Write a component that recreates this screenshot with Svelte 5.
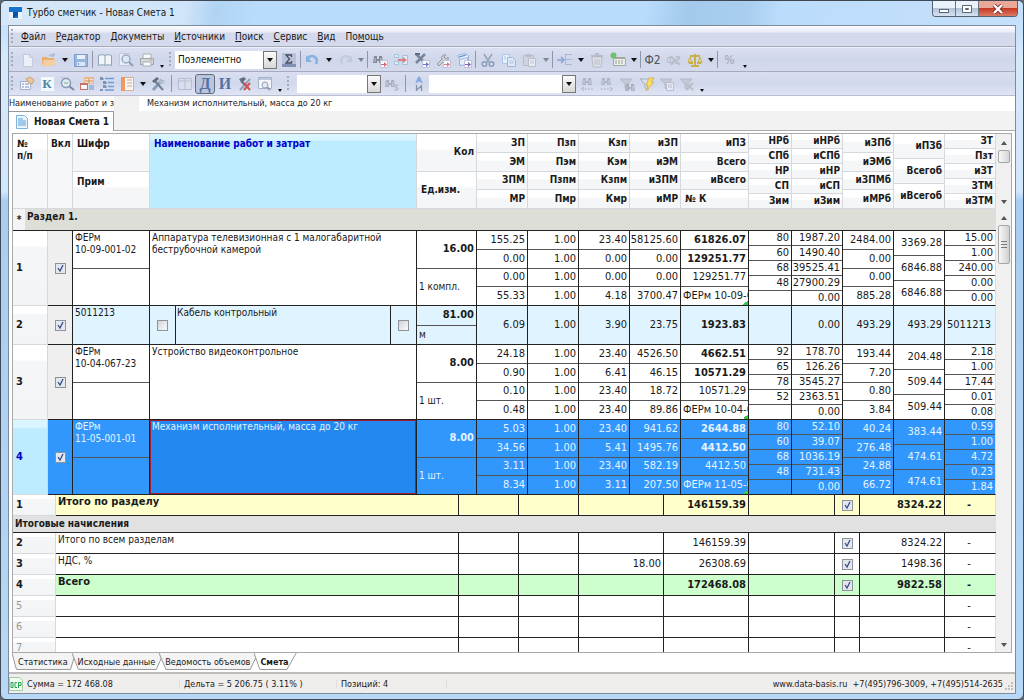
<script lang="ts">
	interface EstimateRow {
		num: number;
		code: string[];
		name: string;
		qty: string;
		unit: string;
		resource?: boolean;
		values: string[][];
	}

	interface TotalRow {
		num: number;
		name: string;
		percent?: string;
		sum?: string;
		base?: string;
		kind?: string;
	}

	interface Tool {
		type?: 'icon' | 'caret' | 'sep' | 'grip' | 'more' | 'combo';
		icon?: string;
		title?: string;
		options?: string[];
		size?: string;
		off?: boolean;
		pressed?: boolean;
	}

	const menu = [
		['', 'Ф', 'айл'],
		['', 'Р', 'едактор'],
		['', 'Д', 'окументы'],
		['', 'И', 'сточники'],
		['', 'П', 'оиск'],
		['', 'С', 'ервис'],
		['', 'В', 'ид'],
		['По', 'м', 'ощь']
	];

	const binoc = '<path d="M2 4h3v3h2V4h3l1 7H7V9H5v2H1z" fill="#777d86"/><path d="M3 6v4M9 6v4" stroke="#c4c8d0"/>';
	const arrowBox = (c: string) =>
		`<path d="M8.500 8.500h7v7h-7z" fill="#fff" stroke="#b9bfd6"/><path d="M9 12h3v-2l3 2.500-3 2.500v-2H9z" fill="${c}"/>`;
	const funnel = '<path d="M1 3h12L9 8v6l-3-2V8z" fill="#c3c7d3" stroke="#b0b5c4"/>';

	// 16x16 toolbar glyphs
	const icons: Record<string, string> = {
		new: '<path d="M3.500 2.500h6l3 3v9h-9z" fill="#f3f5fb" stroke="#c3c9db"/><path d="M9.500 2.500v3h3" fill="none" stroke="#c3c9db"/>',
		open: '<path d="M1 5h5l1 1h6v8H1z" fill="#eda95c"/><path d="M3 8h12l-2 6H1z" fill="#f8cd94"/><path d="M8 4c1-2 4-2 5 0M13 1v3h-3" fill="none" stroke="#8fa6c4"/>',
		save: '<path d="M1.500 2.500h13v12h-13z" fill="#8fb2df" stroke="#6f94c7"/><path d="M4 3h8v4H4z" fill="#edf3fb"/><path d="M4 10h8v4H4z" fill="#dde8f6"/><path d="M5.500 11v2" stroke="#6f94c7"/>',
		book: '<path d="M1.500 3.500c2-1 5-1 6.500 0 1.500-1 4.500-1 6.500 0v10c-2-1-5-1-6.500 0-1.500-1-4.500-1-6.500 0z" fill="#f8fafc" stroke="#7f9ba9"/><path d="M8 3v10" stroke="#7f9ba9"/>',
		preview: '<path d="M1.500 1.500h10v12h-10z" fill="#eef2fa" stroke="#bcc6dc"/><circle cx="8" cy="7" r="4" fill="#dcebfa" stroke="#93a3b9" stroke-width="1.500"/><path d="M11 10l4 4" stroke="#8693a6" stroke-width="2"/>',
		print: '<path d="M4 6V2h8v4" fill="#fff" stroke="#a5a9b0"/><path d="M1.500 6.500h13v6h-13z" fill="#d5d5d3" stroke="#9b9d9f"/><path d="M4 10h8v4H4z" fill="#fff" stroke="#a5a9b0"/><path d="M11 8h2" stroke="#c9a24d"/>',
		sigma: '<path d="M1 1h14v14H1z" fill="#b4bfd8"/><path d="M1 12h14v3H1z" fill="#7486ad"/><path d="M10.500 5V3H5l3.500 4L5 11h5.500V9" fill="none" stroke="#2f3744" stroke-width="1.300"/>',
		undo: '<path d="M3 6c4-4 11-1 8 6" fill="none" stroke="#7bacdf" stroke-width="2.500"/><path d="M1 3v7h6z" fill="#7bacdf"/>',
		redo: '<path d="M13 6C9 2 2 5 5 12" fill="none" stroke="#c0c7da" stroke-width="2"/><path d="M15 3v7H9z" fill="#c0c7da"/>',
		find: binoc + arrowBox('#d5565e'),
		blocks: '<path d="M1.500 2.500h4v3h-4zM1.500 9.500h4v3h-4zM9.500 3.500h5v9h-5z" fill="#e6f0f8" stroke="#9dc0d2"/><path d="M5 7h5V5l4 3-4 3V9H5z" fill="#df6b73"/>',
		toolsGo: '<path d="M2 2l9 9M11 2l-9 9" stroke="#66788f" stroke-width="2.500"/><path d="M1 2h5" stroke="#4d5c70" stroke-width="2"/>' + arrowBox('#5868c7'),
		wrenchGo: '<path d="M2 12l5-5a3 3 0 0 1 4-4l-2 2 2 2 2-2a3 3 0 0 1-4 4l-5 5z" fill="#c9cdd4" stroke="#8e9097"/>' + arrowBox('#df6b73'),
		docsGo: '<path d="M1.500 3.500l7-2 4 2v6l-7 1z" fill="#f5f9ff" stroke="#8fb0dc"/><path d="M3.500 7.500l8-2v7l-8 1z" fill="#e9f1fc" stroke="#8fb0dc"/><path d="M3 5l7-2" stroke="#5f8fd2" stroke-width="1.500"/>' + arrowBox('#7b50b8'),
		cut: '<path d="M4 2l5 8M12 2l-5 8" stroke="#8b9bb2" stroke-width="1.500"/><circle cx="4.500" cy="12" r="2.300" fill="none" stroke="#7f93b4" stroke-width="1.500"/><circle cx="11.500" cy="12" r="2.300" fill="none" stroke="#7f93b4" stroke-width="1.500"/>',
		copy: '<path d="M1.500 2.500h7v9h-7z" fill="#eef4fc" stroke="#a6c3e6"/><path d="M6.500 5.500h5l3 3v6h-8z" fill="#e4eefa" stroke="#8db4e0"/><path d="M8 9h5M8 11h5M3 5h2M3 7h2" stroke="#a6c3e6"/>',
		paste: '<path d="M1.500 3.500h10v10h-10z" fill="#cfd3df" stroke="#b6bac6"/><path d="M4 2h5v3H4z" fill="#b6bac6"/><path d="M6.500 6.500h7v8h-7z" fill="#eceef4" stroke="#b6bac6"/><path d="M8 9h4M8 11h4" stroke="#c2c6d0"/>',
		insert: '<path d="M0 8h6M4 5l3 3-3 3" fill="none" stroke="#7ba0d0" stroke-width="1.500"/><path d="M9 2.500h6M9 12.500h6M9 7.500h6M8.500 2v11" stroke="#9fb3d2"/>',
		trash: '<path d="M3 5h10l-1 10H4z" fill="#e3e5ea" stroke="#b4b7bf"/><path d="M6 7v6M8 7v6M10 7v6" stroke="#b4b7bf"/><path d="M2 4h12M6 2h4" stroke="#a9adb6" stroke-width="1.500"/>',
		card: '<path d="M3.500 6.500h12v7h-12z" fill="#f2f5ee" stroke="#9aa08f"/><path d="M5 9h9M5 11h9" stroke="#8a907f" stroke-dasharray="2 1"/><path d="M5 5.500h10" stroke="#9aa08f"/><circle cx="3.500" cy="3.500" r="3" fill="#5cbd5c"/>',
		formOff: '<text x="0" y="12" font-size="11" fill="#b3b8c6">Ф2</text><path d="M5 4l9 9M14 4l-9 9" stroke="#b3b8c6" stroke-width="1.500"/>',
		scales: '<path d="M8 2v11M4 14h8M3 4h10" stroke="#c8a92e" stroke-width="2"/><path d="M1 10l2-5 2 5zM11 10l2-5 2 5z" fill="#f3e08b" stroke="#c8a92e"/><path d="M1 10h5v2H2zM10 10h5l-1 2h-4z" fill="#c8a92e"/>',
		props: '<path d="M1.500 5.500h10v8h-10z" fill="#fbfcff" stroke="#9aa9c4"/><path d="M3 8h2M3 11h2M6 8h4M6 11h4" stroke="#6d86b5"/><path d="M7 3l4-2 4 3-2 4-3-1z" fill="#f0c48c" stroke="#c79a62"/>',
		search: '<path d="M1.500 1.500h8v9" fill="none" stroke="#b9c3d8"/><circle cx="7" cy="7" r="4.500" fill="#e4f0fb" stroke="#7d90a8" stroke-width="1.500"/><path d="M5 7h4" stroke="#68a468"/><path d="M10 10l5 4" stroke="#6d7f96" stroke-width="2"/>',
		cards: '<path d="M5 1h10v7H5z" fill="#eab27c"/><path d="M6 3h8v4H6z" fill="#fde7ca"/><path d="M1 7h8v7H1z" fill="#c85d52"/><path d="M2 9h6v4H2z" fill="#fff"/><path d="M10 9h5v5h-5z" fill="#9bb3d8"/><path d="M10 3v4M6 5h8" stroke="#cb7f46"/>',
		tree: '<path d="M2 3h3M5 7h3M5 11h3" stroke="#68788f"/><path d="M6 2.500h9M9 6.500h6M9 10.500h6M6 14h9" stroke="#5f93d1" stroke-width="1.500"/><path d="M1 1h3v3H1zM4 5h3v3H4zM4 9h3v3H4zM1 13h3v2H1z" fill="#6f87ad"/>',
		panel: '<path d="M2.500 1.500h12v13h-12z" fill="#fffaf4" stroke="#e3a56e"/><path d="M2 1h4v14H2z" fill="#ed9150"/><path d="M8 4h5M8 7h5M8 10h5" stroke="#c7a587"/>',
		tools: '<path d="M3 14L12 4" stroke="#7895b9" stroke-width="3"/><path d="M13 14L5 5" stroke="#65717f" stroke-width="2"/><path d="M2 5l5-4 2 2-5 4z" fill="#505b68"/><path d="M10 2l2 3 3-1-2 4-4-1z" fill="#a9bbd0"/>',
		table: '<path d="M1.500 2.500h13v11h-13z" fill="#dce0ec" stroke="#b1b9cd"/><path d="M2 5h12M8 3v10" stroke="#b1b9cd"/>',
		toolsX: '<path d="M3 14L13 3" stroke="#8598b3" stroke-width="2"/><path d="M2 3l5-2 2 2-4 4z" fill="#4f5e74"/><path d="M4 5l4 4" stroke="#4f5e74" stroke-width="2"/><path d="M7 7l6 7M13 7l-6 7" stroke="#d03c37" stroke-width="2"/>',
		winFind: '<path d="M1.500 1.500h13v11h-13z" fill="#fafbfe" stroke="#a0abc1"/><path d="M2 3h12" stroke="#b9c5dd" stroke-width="2"/><circle cx="8" cy="9" r="3" fill="#e4effa" stroke="#8593a8"/><path d="M10 11l3 3" stroke="#8593a8" stroke-width="2"/>',
		binocOff: '<g opacity=".5">' + binoc + '<path d="M10 9h4l-3 3h3v2h-4" stroke="#777d86" fill="none"/></g>',
		sort: '<path d="M5 7l3-6 3 6M6 5h4M6 3h4" fill="none" stroke="#6c9fe0" stroke-width="1.300"/><path d="M5.500 9v6M10.500 9v6M5.500 14l5-4" fill="none" stroke="#7a879d" stroke-width="1.300"/>',
		prev: '<g opacity=".45" transform="translate(2 -2)">' + binoc + '</g><path d="M14 13H3M5 11l-3 2 3 2" fill="none" stroke="#a5aec1" stroke-dasharray="2 1"/>',
		next: '<g opacity=".45" transform="translate(1 -2)">' + binoc + '</g><path d="M2 13h11M11 11l3 2-3 2" fill="none" stroke="#a5aec1" stroke-dasharray="2 1"/>',
		funnelFind: funnel + '<g opacity=".5" transform="translate(5 4)">' + binoc + '</g>',
		flash: '<path d="M1 3h12L9 8v6l-3-2V8z" fill="#dbe2ee" stroke="#9ba5b6"/><path d="M10 2h5l-3 4h3l-8 9 2-6H7z" fill="#ffe14c" stroke="#d0a52b" stroke-width=".8"/>',
		funnelDoc: funnel + '<path d="M7.500 6.500h7v8h-7z" fill="#eceef5" stroke="#b4b9c8"/><path d="M9 9h4M9 11h4" stroke="#b4b9c8"/>',
		funnelX: funnel + '<path d="M7 7l7 7M14 7l-7 7" stroke="#b4b9c4" stroke-width="2"/>'
	};

	const toolbar: Tool[] = [
		{ type: 'grip' },
		{ icon: 'new', title: 'Создать' },
		{ icon: 'open', title: 'Открыть' },
		{ type: 'caret' },
		{ icon: 'save', title: 'Сохранить' },
		{ type: 'sep' },
		{ icon: 'book', title: 'Справочник' },
		{ icon: 'preview', title: 'Просмотр' },
		{ icon: 'print', title: 'Печать' },
		{ type: 'more' },
		{ type: 'grip' },
		{ type: 'combo', size: 'mode', title: 'Режим', options: ['Поэлементно'] },
		{ icon: 'sigma', title: 'Сумма' },
		{ type: 'sep' },
		{ icon: 'undo', title: 'Отменить' },
		{ type: 'caret' },
		{ icon: 'redo', title: 'Вернуть' },
		{ type: 'caret', off: true },
		{ type: 'sep' },
		{ icon: 'find', title: 'Найти в базе' },
		{ icon: 'blocks', title: 'Заменить' },
		{ icon: 'toolsGo', title: 'Ресурсы' },
		{ icon: 'wrenchGo', title: 'Механизмы' },
		{ icon: 'docsGo', title: 'Документы' },
		{ type: 'sep' },
		{ icon: 'cut', title: 'Вырезать' },
		{ icon: 'copy', title: 'Копировать' },
		{ icon: 'paste', title: 'Вставить' },
		{ type: 'caret', off: true },
		{ type: 'sep' },
		{ icon: 'insert', title: 'Вставить строку' },
		{ type: 'caret' },
		{ icon: 'trash', title: 'Удалить' },
		{ icon: 'card', title: 'Карточка' },
		{ type: 'caret' },
		{ type: 'sep' },
		{ icon: 'Ф2', title: 'Форма 2' },
		{ icon: 'formOff', title: 'Снять форму 2' },
		{ icon: 'scales', title: 'Сравнение' },
		{ type: 'caret' },
		{ type: 'sep' },
		{ icon: '%', title: 'Проценты', off: true },
		{ type: 'more' }
	];

	const toolbar2: Tool[] = [
		{ type: 'grip' },
		{ icon: 'props', title: 'Свойства' },
		{ icon: 'К', title: 'Коэффициенты' },
		{ icon: 'search', title: 'Поиск' },
		{ icon: 'cards', title: 'Таблицы' },
		{ icon: 'tree', title: 'Дерево' },
		{ icon: 'panel', title: 'Панель' },
		{ type: 'caret' },
		{ icon: 'tools', title: 'Настройки' },
		{ type: 'sep' },
		{ icon: 'table', title: 'Таблица' },
		{ icon: 'Д', title: 'Дополнительно', pressed: true },
		{ icon: 'И', title: 'Итоги' },
		{ icon: 'toolsX', title: 'Сбросить' },
		{ icon: 'winFind', title: 'Окно поиска' },
		{ type: 'more' },
		{ type: 'grip' },
		{ type: 'combo', size: 'column', title: 'Столбец', options: [''] },
		{ icon: 'binocOff', title: 'Найти' },
		{ type: 'sep' },
		{ icon: 'sort', title: 'Сортировка' },
		{ type: 'combo', size: 'query', title: 'Искать', options: [''] },
		{ icon: 'prev', title: 'Назад' },
		{ icon: 'next', title: 'Далее' },
		{ icon: 'funnelFind', title: 'Фильтр поиска' },
		{ icon: 'flash', title: 'Быстрый фильтр' },
		{ icon: 'funnelDoc', title: 'Фильтр документа' },
		{ icon: 'funnelX', title: 'Снять фильтр' },
		{ type: 'more' }
	];

	const headers = [
		['ЗП', 'ЭМ', 'ЗПМ', 'МР'],
		['Пзп', 'Пэм', 'Пзпм', 'Пмр'],
		['Кзп', 'Кэм', 'Кзпм', 'Кмр'],
		['иЗП', 'иЭМ', 'иЗПМ', 'иМР'],
		['иПЗ', 'Всего', 'иВсего', '№ К'],
		['НРб', 'СПб', 'НР', 'СП', 'Зим'],
		['иНРб', 'иСПб', 'иНР', 'иСП', 'иЗим'],
		['иЗПб', 'иЭМб', 'иЗПМб', 'иМРб'],
		['иПЗб', 'Всегоб', 'иВсегоб'],
		['ЗТ', 'Пзт', 'иЗТ', 'ЗТМ', 'иЗТМ']
	];

	const rows: EstimateRow[] = [
		{
			num: 1,
			code: ['ФЕРм', '10-09-001-02'],
			name: 'Аппаратура телевизионная с 1 малогабаритной беструбочной камерой',
			qty: '16.00',
			unit: '1 компл.',
			values: [
				['155.25', '0.00', '0.00', '55.33'],
				['1.00', '1.00', '1.00', '1.00'],
				['23.40', '0.00', '0.00', '4.18'],
				['58125.60', '0.00', '0.00', '3700.47'],
				['61826.07', '129251.77', '129251.77', 'ФЕРм 10-09-001-02'],
				['80', '60', '68', '48', ''],
				['1987.20', '1490.40', '39525.41', '27900.29', '0.00'],
				['2484.00', '0.00', '0.00', '885.28'],
				['3369.28', '6846.88', '6846.88'],
				['15.00', '1.00', '240.00', '0.00', '0.00']
			]
		},
		{
			num: 2,
			code: ['5011213'],
			name: 'Кабель контрольный',
			qty: '81.00',
			unit: 'м',
			resource: true,
			values: [['6.09'], ['1.00'], ['3.90'], ['23.75'], ['1923.83'], [''], ['0.00'], ['493.29'], ['493.29'], ['5011213']]
		},
		{
			num: 3,
			code: ['ФЕРм', '10-04-067-23'],
			name: 'Устройство видеоконтрольное',
			qty: '8.00',
			unit: '1 шт.',
			values: [
				['24.18', '0.90', '0.10', '0.48'],
				['1.00', '1.00', '1.00', '1.00'],
				['23.40', '6.41', '23.40', '23.40'],
				['4526.50', '46.15', '18.72', '89.86'],
				['4662.51', '10571.29', '10571.29', 'ФЕРм 10-04-067-23'],
				['92', '65', '78', '52', ''],
				['178.70', '126.26', '3545.27', '2363.51', '0.00'],
				['193.44', '7.20', '0.80', '3.84'],
				['204.48', '509.44', '509.44'],
				['2.18', '1.00', '17.44', '0.01', '0.08']
			]
		},
		{
			num: 4,
			code: ['ФЕРм', '11-05-001-01'],
			name: 'Механизм исполнительный, масса до 20 кг',
			qty: '8.00',
			unit: '1 шт.',
			values: [
				['5.03', '34.56', '3.11', '8.34'],
				['1.00', '1.00', '1.00', '1.00'],
				['23.40', '5.41', '23.40', '3.11'],
				['941.62', '1495.76', '582.19', '207.50'],
				['2644.88', '4412.50', '4412.50', 'ФЕРм 11-05-001-01'],
				['80', '60', '68', '48', ''],
				['52.10', '39.07', '1036.19', '731.43', '0.00'],
				['40.24', '276.48', '24.88', '66.72'],
				['383.44', '474.61', '474.61'],
				['0.59', '1.00', '4.72', '0.23', '1.84']
			]
		}
	];

	const totals: TotalRow[] = [
		{ num: 2, name: 'Итого по всем разделам', sum: '146159.39', base: '8324.22' },
		{ num: 3, name: 'НДС, %', percent: '18.00', sum: '26308.69', base: '1498.36' },
		{ num: 4, name: 'Всего', sum: '172468.08', base: '9822.58', kind: 'grand' },
		{ num: 5, name: '' },
		{ num: 6, name: '' },
		{ num: 7, name: '' }
	];

	const sheets = ['Статистика', 'Исходные данные', 'Ведомость объемов', 'Смета'];

	let selected = $state(4);
	let sheet = $state('Смета');
</script>

{#snippet tools(items: Tool[])}
	{#each items as tool}
		{#if tool.type === 'grip'}
			<span class="grip"></span>
		{:else if tool.type === 'sep'}
			<span class="sep"></span>
		{:else if tool.type === 'caret'}
			<button class="caret" class:off={tool.off} aria-label="Список"><i></i></button>
		{:else if tool.type === 'more'}
			<button class="caret more" aria-label="Ещё"><i></i></button>
		{:else if tool.type === 'combo'}
			<span class="combo {tool.size}">
				<select aria-label={tool.title}>
					{#each tool.options ?? [] as option}
						<option>{option}</option>
					{/each}
				</select>
				<span class="drop"><i></i></span>
			</span>
		{:else}
			<button class="tool" class:off={tool.off} class:pressed={tool.pressed} title={tool.title}>
				{#if icons[tool.icon ?? '']}
					<svg width="16" height="16" viewBox="0 0 16 16">{@html icons[tool.icon ?? '']}</svg>
				{:else}
					<span class="glyph" class:serif={'КДИ'.includes(tool.icon ?? '')} class:boxed={tool.icon === 'К'}>{tool.icon}</span>
				{/if}
			</button>
		{/if}
	{/each}
{/snippet}

{#snippet totalCells(row: TotalRow)}
	<th class="num" scope="row">{row.num}</th>
	<td class="name">{row.name}</td>
	<td></td>
	<td></td>
	<td>{row.percent ?? ''}</td>
	<td>{row.sum ?? ''}</td>
	<td></td>
	<td class="check">
		{#if row.sum}
			<input type="checkbox" checked aria-label="Учитывать: {row.name}" />
		{/if}
	</td>
	<td>{row.base ?? ''}</td>
	<td class="dash">-</td>
{/snippet}

<div class="window">
	<header class="title-bar">
		<svg class="logo" width="13" height="13" viewBox="0 0 13 13">
			<rect width="13" height="13" fill="#e9f3fd" />
			<path d="M0 1h13v5H9v6H4V6H0z" fill="#1673cf" />
			<path d="M4 6h5v3L4 12z" fill="#0d529f" />
		</svg>
		<span class="title">Турбо сметчик - Новая Смета 1</span>
		<div class="window-buttons">
			<button aria-label="Свернуть">
				<svg width="12" height="10" viewBox="0 0 12 10"><rect x="1.500" y="5.500" width="9" height="3" fill="#fff" stroke="#5b6675" /></svg>
			</button>
			<button aria-label="Развернуть">
				<svg width="12" height="10" viewBox="0 0 12 10"><path d="M1.500 1.500h9v7h-9zM4.500 4.500h3v1h-3z" fill="#fff" stroke="#5b6675" /></svg>
			</button>
			<button class="close" aria-label="Закрыть">
				<svg width="12" height="10" viewBox="0 0 12 10">
					<path d="M2 1l8 8M10 1l-8 8" stroke="#7c2f2a" stroke-width="4" />
					<path d="M2 1l8 8M10 1l-8 8" stroke="#fff" stroke-width="2.400" />
				</svg>
			</button>
		</div>
	</header>

	<div class="client">
		<nav class="menu">
			<span class="grip"></span>
			{#each menu as [before, key, after]}
				<button>{before}<u>{key}</u>{after}</button>
			{/each}
		</nav>
		<div class="toolbar">{@render tools(toolbar)}</div>
		<div class="toolbar second">{@render tools(toolbar2)}</div>

		<div class="info">
			<span class="field">Наименование работ и затрат</span>
			<span class="value">Механизм исполнительный, масса до 20 кг</span>
		</div>

		<div class="doc-tabs">
			<button class="doc-tab">
				<svg width="12" height="14" viewBox="0 0 12 14">
					<path d="M.500.500h8l3 3v10H.500z" fill="#e9f4fd" stroke="#7db3dc" />
					<path d="M2 4h5M2 6h8M2 8h8M2 10h8" stroke="#5c9ed2" />
				</svg>
				Новая Смета 1
			</button>
		</div>

		<main class="page">
			<div class="grid-box">
				<div class="tables">
					<table class="estimate">
						<colgroup>
							<col class="w35" /><col class="w25" /><col class="w77" /><col /><col class="w60" />
							<col class="w51" /><col class="w51" /><col class="w51" /><col class="w51" /><col class="w68" />
							<col class="w43" /><col class="w51" /><col class="w51" /><col class="w51" /><col class="w51" />
						</colgroup>
						<thead>
							<tr>
								<th class="top">№<br />п/п</th>
								<th class="top tight">Вкл</th>
								<th>
									<div class="stack left">
										<span>Шифр</span>
										<span>Прим</span>
									</div>
								</th>
								<th class="top current">Наименование работ и затрат</th>
								<th>
									<div class="stack">
										<span>Кол</span>
										<span class="start">Ед.изм.</span>
									</div>
								</th>
								{#each headers as group}
									<th>
										<div class="stack">
											{#each group as label}
												<span class:start={label === '№ К'}>{label}</span>
											{/each}
										</div>
									</th>
								{/each}
							</tr>
						</thead>
						<tbody>
							<tr class="section">
								<td colspan="15"><div class="section-name"><b>*</b><span>Раздел 1.</span></div></td>
							</tr>
							{#each rows as row}
								<tr class:resource={row.resource} class:selected={selected === row.num} onclick={() => (selected = row.num)}>
									<th class="num" scope="row">{row.num}</th>
									<td class="check"><input type="checkbox" checked aria-label="Включить строку {row.num}" /></td>
									<td>
										<div class="stack left code">
											<span>{#each row.code as line}{line}<br />{/each}</span>
											{#if !row.resource}<span></span>{/if}
										</div>
									</td>
									<td class="name">
										{#if row.resource}
											<div class="split">
												<span class="check"><input type="checkbox" aria-label="Материал заказчика" /></span>
												<span class="text">{row.name}</span>
												<span class="check"><input type="checkbox" aria-label="Оборудование" /></span>
											</div>
										{:else}
											<div class="text">{row.name}</div>
										{/if}
									</td>
									<td>
										<div class="stack">
											<span class="bold">{row.qty}</span>
											<span class="start unit">{row.unit}</span>
										</div>
									</td>
									{#each row.values as group, g}
										<td>
											<div class="stack">
												{#each group as value, i}
													<span
														class:bold={g === 4 && i < 2}
														class:source={g === 4 && i === 3}
														class:start={row.resource && g === 9}>{value}</span
													>
												{/each}
											</div>
										</td>
									{/each}
								</tr>
							{/each}
						</tbody>
					</table>

					<table class="totals">
						<colgroup>
							<col class="w43" /><col /><col class="w60" /><col class="w60" /><col class="w85" />
							<col class="w85" /><col class="w86" /><col class="w25" /><col class="w85" /><col class="w51" />
						</colgroup>
						<tbody>
							<tr class="subtotal">{@render totalCells({ num: 1, name: 'Итого по разделу', sum: '146159.39', base: '8324.22' })}</tr>
							<tr class="caption"><th colspan="10">Итоговые начисления</th></tr>
							{#each totals as row}
								<tr class={row.kind} class:empty={!row.sum}>{@render totalCells(row)}</tr>
							{/each}
						</tbody>
					</table>
				</div>

				<div class="scrolls">
					<div class="scroll head"><i class="up"></i><span class="thumb"></span><i class="down"></i></div>
					<div class="scroll"><i class="up"></i><span class="thumb long"></span><i class="down"></i></div>
				</div>
			</div>

			<div class="sheets">
				{#each sheets as name}
					<button class:active={sheet === name} onclick={() => (sheet = name)}>
						<svg viewBox="0 0 100 16" preserveAspectRatio="none">
							<path d={sheet === name ? 'M0 0L14 15.500H78L100 0' : 'M0 0L7 15.500H92L100 0'} vector-effect="non-scaling-stroke" />
						</svg>
						<span>{name}</span>
					</button>
				{/each}
			</div>
		</main>

		<footer class="status">
			<svg width="14" height="14" viewBox="0 0 14 14">
				<path d="M.500.500h10l3 3v10H.500z" fill="#f1fbf2" stroke="#9ccfa4" />
				<path d="M2 5.500h2v5H2zM8 5.500H6v5h2M9.500 11V5.500h2.500v3H9.500" fill="none" stroke="#23a24d" />
			</svg>
			<span class="part">Сумма = 172 468.08</span>
			<span class="part">Дельта = 5 206.75 ( 3.11% )</span>
			<span class="part last">Позиций: 4</span>
			<span class="contacts">www.data-basis.ru&nbsp; +7(495)796-3009, +7(495)514-2635</span>
			<svg class="size-grip" width="9" height="9" viewBox="0 0 9 9">
				<path d="M6 0h2v2H6zM6 3h2v2H6zM3 3h2v2H3zM6 6h2v2H6zM3 6h2v2H3zM0 6h2v2H0z" fill="#c4c0c0" />
			</svg>
		</footer>
	</div>
</div>

<style>
	:global(body) {
		margin: 0;
		background: #5d6672;
	}

	.window {
		--ui: 'DejaVu Sans Condensed', 'DejaVu Sans', sans-serif;
		box-sizing: border-box;
		height: 100vh;
		display: flex;
		flex-direction: column;
		padding: 0 7px 5px 7px;
		border: 1px solid #3f4853;
		border-radius: 6px;
		background: linear-gradient(180deg, #b9dbfb 0, #d6e9fb 60px, #d3e7fa 190px, #a9cdf0 200px, #b7d8f6 100%);
		font-family: var(--ui);
		font-size: 10px;
		color: #1a1a1a;
		overflow: hidden;
	}

	button {
		font: inherit;
		color: inherit;
		padding: 0;
		border: 0;
		background: none;
	}

	i {
		display: block;
		width: 0;
		height: 0;
		border: 3px solid transparent;
		border-top: 4px solid #111;
		border-bottom: 0;
	}

	/* Title bar */
	.title-bar {
		flex: none;
		display: flex;
		align-items: flex-start;
		height: 24px;
		margin: 0 -7px;
		padding-left: 8px;
		background: linear-gradient(100deg, #d5e7f8 0, #d0e5f9 18%, #b2d4f3 21%, #b9dcfc 25%, #b9dcfc 63%, #a3c9ec 67%, #a9cef0 73%, #bbdcfb 76%, #c5e0fa 100%);
	}

	.logo {
		margin-top: 5px;
	}

	.title {
		flex: 1;
		padding-left: 5px;
		line-height: 24px;
	}

	.window-buttons {
		display: flex;
		margin-right: 5px;
		border: 1px solid #56616f;
		border-top: 0;
		border-radius: 0 0 4px 4px;
		overflow: hidden;
	}

	.window-buttons button {
		display: flex;
		align-items: center;
		justify-content: center;
		width: 23px;
		height: 15px;
		border-right: 1px solid #6a7685;
		background: linear-gradient(#eaf2fb 45%, #b3c4d8 50%, #d5e3f2);
	}

	.window-buttons .close {
		width: 38px;
		border: 0;
		background: linear-gradient(#e9a898 45%, #c63a24 50%, #dc7a62);
	}

	.client {
		flex: 1;
		min-height: 0;
		display: flex;
		flex-direction: column;
		border: 1px solid #7e8b9c;
		background: #fff;
	}

	/* Menu and toolbars */
	.menu {
		flex: none;
		display: flex;
		align-items: center;
		height: 20px;
		background: linear-gradient(#fbfcff, #e9ecf7 30%, #d4d9ec 36%, #d4d9ec);
		border-bottom: 1px solid #a4abbe;
	}

	.menu button {
		margin-left: 2px;
		margin-right: 8px;
	}

	.menu .grip {
		margin-right: 2px;
	}

	.grip {
		flex: none;
		width: 8px;
		height: 17px;
		background: radial-gradient(circle, #a3abc1 1px, transparent 1px) 1px 0 / 4px 4px repeat-y;
	}

	.toolbar {
		--btn: 21px;
		--sep: 3px;
		flex: none;
		display: flex;
		align-items: center;
		height: 23px;
		background: linear-gradient(#dbe0f1, #d0d7ea 50%, #d5daed);
		border-top: 1px solid #eef0f8;
	}

	.toolbar.second {
		--btn: 20px;
		--sep: 7px;
		border-bottom: 1px solid #b9bfce;
		border-top-color: #a4abbe;
		background: linear-gradient(#dadff0, #d1d8ec 50%, #e0e4f4);
	}

	.tool {
		flex: none;
		display: flex;
		align-items: center;
		justify-content: center;
		width: var(--btn);
		height: 20px;
	}

	.tool svg {
		opacity: 0.85;
	}

	.tool.pressed {
		box-sizing: border-box;
		border: 1px solid #5f6b80;
		border-radius: 3px;
		background: #bcc5dc;
	}

	.glyph {
		font-size: 12px;
		line-height: 14px;
		color: #4e535c;
	}

	.glyph.serif {
		font: bold 16px/16px 'Liberation Serif', serif;
		color: #5373a5;
	}

	.glyph.boxed {
		width: 13px;
		font-size: 13px;
		line-height: 14px;
		background: #f3f8fd;
		color: #4b86a5;
	}

	.tool.off .glyph {
		color: #9ea4b5;
	}

	.caret {
		flex: none;
		display: flex;
		align-items: center;
		justify-content: center;
		width: 11px;
		height: 20px;
	}

	.caret.off i {
		border-top-color: #7d8494;
	}

	.caret.more {
		box-sizing: border-box;
		align-items: flex-end;
		width: 10px;
		padding-bottom: 2px;
	}

	.caret.more i {
		border-width: 3px 2px 0;
	}

	.sep {
		flex: none;
		width: 1px;
		height: 17px;
		margin: 0 calc((var(--sep) - 1px) / 2);
		background: #8e96a9;
	}

	.combo {
		flex: none;
		display: block;
		position: relative;
		height: 18px;
		margin-right: 1px;
	}

	.combo.mode {
		width: 102px;
	}

	.combo.column {
		width: 84px;
		margin-left: 4px;
	}

	.combo.query {
		width: 147px;
	}

	.combo select {
		appearance: none;
		box-sizing: border-box;
		width: 100%;
		height: 18px;
		padding: 0 16px 0 3px;
		border: 0;
		border-radius: 0;
		background: #fff;
		font-family: var(--ui);
		font-size: 10px;
		color: #111;
	}

	.drop {
		position: absolute;
		top: 0;
		right: 0;
		display: flex;
		align-items: center;
		justify-content: center;
		width: 12px;
		height: 16px;
		border: 1px solid #777;
		background: linear-gradient(#fafafa, #d8d8d8);
		pointer-events: none;
	}

	/* Info line and document tab */
	.info {
		flex: none;
		display: flex;
		height: 15px;
		background: #f1f1f1;
		font-size: 9px;
		line-height: 14px;
		white-space: nowrap;
	}

	.info .field {
		width: 105px;
		overflow: hidden;
		background: #fff;
	}

	.info .value {
		flex: 1;
		margin-left: 25px;
		padding-left: 8px;
		background: #fff;
	}

	.doc-tabs {
		flex: none;
		display: flex;
		height: 19px;
		background: #f2f2f2;
		border-bottom: 1px solid #aaa;
	}

	.doc-tab {
		display: flex;
		align-items: center;
		gap: 6px;
		height: 20px;
		padding: 0 4px 0 7px;
		border: 1px solid #999;
		border-width: 1px 1px 0 0;
		background: #fff;
		font-weight: bold;
		white-space: nowrap;
	}

	/* Grid */
	.page {
		flex: 1;
		min-height: 0;
		display: flex;
		flex-direction: column;
		padding: 2px 3px 0 3px;
		border-bottom: 2px solid #bcbcbc;
	}

	.grid-box {
		flex: 1;
		min-height: 0;
		display: flex;
		border: 1px solid #a9a9a9;
	}

	.tables {
		flex: 1;
		min-width: 0;
		overflow: hidden;
	}

	table {
		width: 100%;
		table-layout: fixed;
		border-spacing: 0;
		font-size: 11px;
		line-height: 12px;
	}

	.w25 { width: 25px; }
	.w35 { width: 35px; }
	.w43 { width: 43px; }
	.w51 { width: 51px; }
	.w60 { width: 60px; }
	.w68 { width: 68px; }
	.w77 { width: 77px; }
	.w85 { width: 85px; }
	.w86 { width: 86px; }

	td,
	th {
		box-sizing: border-box;
		padding: 0;
		border-right: 1px solid #222;
		border-bottom: 1px solid #222;
		text-align: right;
		overflow: hidden;
	}

	td:last-child {
		border-right-color: #ddd;
	}

	thead th {
		height: 75px;
		border-color: #d5d8dc;
		background: linear-gradient(#fff 20%, #f6f7f9 22%, #f4f6f8);
		font-size: 10px;
	}

	thead th.top {
		padding: 4px;
		text-align: left;
		vertical-align: top;
	}

	thead th.tight {
		padding: 4px 0 4px 3px;
	}

	thead th.current {
		background: linear-gradient(#d9f5ff 8%, #bdebff 10%);
		color: #0000c8;
	}

	.stack {
		display: flex;
		flex-direction: column;
		height: 74px;
	}

	.stack > span {
		flex: 1;
		min-height: 0;
		display: flex;
		align-items: center;
		justify-content: flex-end;
		padding: 0 2px;
		border-bottom: 1px solid #555;
		white-space: nowrap;
		overflow: hidden;
	}

	.stack > span:last-child {
		border-bottom: 0;
	}

	.stack > .start,
	.stack.left > span {
		justify-content: flex-start;
	}

	thead .stack > span {
		border-color: #d5d8dc;
		background: linear-gradient(#fff 40%, #f4f6f8 45%);
	}

	thead .stack > .start {
		padding-left: 4px;
	}

	thead .stack.left > span {
		align-items: flex-start;
		padding: 4px;
	}

	.stack.code > span {
		display: block;
		padding-top: 1px;
		text-align: left;
	}

	.stack.code,
	.stack > .unit {
		font-size: 10px;
	}

	.bold {
		font-weight: bold;
	}

	.stack > .source {
		justify-content: flex-start;
		background: linear-gradient(135deg, transparent 50%, #2ecc40 50%) no-repeat right bottom / 5px 5px;
	}

	.num {
		padding-left: 3px;
		border-color: #d5d8dc;
		background: linear-gradient(#fff 20%, #f5f6f8 22%, #f2f4f6);
		text-align: left;
	}

	.section td {
		height: 22px;
		border-right: 0;
		background: #deded8;
	}

	.section-name {
		display: flex;
		font-size: 10px;
		font-weight: bold;
		line-height: 21px;
	}

	.section-name b {
		width: 12px;
		background: #f3f4f5;
		text-align: center;
	}

	.section-name span {
		padding-left: 2px;
		line-height: 16px;
	}

	td.check {
		background: #efefef;
		text-align: center;
	}

	td.name {
		vertical-align: top;
		text-align: left;
		font-size: 10px;
	}

	.text {
		padding: 1px 2px;
	}

	.split {
		display: flex;
		height: 38px;
	}

	.split .text {
		flex: 1;
		padding-left: 1px;
		border: 1px solid #222;
		border-width: 0 1px;
	}

	.split .check {
		display: flex;
		align-items: center;
		justify-content: center;
		width: 25px;
	}

	.resource .stack {
		height: 38px;
	}

	.resource td:not(.check) {
		background: #dff4fe;
	}

	.selected td {
		background: #3197fd;
		color: #e4f2ff;
	}

	.selected td.check {
		background: #3197fd;
	}

	.selected td.name {
		background: #2389f0;
		box-shadow: inset 0 0 0 1px #a02030;
	}

	.selected .num {
		background: linear-gradient(#d9f5ff 10%, #bdebff 12%);
		color: #0000c8;
	}

	input[type='checkbox'] {
		appearance: none;
		display: block;
		box-sizing: border-box;
		width: 11px;
		height: 11px;
		margin: 0 auto;
		border: 1px solid #8e9299;
		background: linear-gradient(135deg, #d0d3d8, #fbfbfb);
	}

	input[type='checkbox']:checked {
		background: url("data:image/svg+xml,%3Csvg xmlns='http://www.w3.org/2000/svg' viewBox='0 0 9 9'%3E%3Cpath d='M2 4l2 3 3-6' fill='none' stroke='%23354b8c' stroke-width='1.300'/%3E%3C/svg%3E") #e3e7ee;
	}

	/* Totals */
	.totals td,
	.totals th {
		height: 21px;
	}

	.totals td {
		padding-right: 2px;
	}

	.totals td.name {
		padding: 1px 2px;
	}

	.totals td.check {
		padding: 0;
		background: none;
	}

	.totals .dash {
		text-align: center;
	}

	.subtotal td,
	.grand td {
		font-weight: bold;
	}

	.subtotal td.name,
	.grand td.name {
		font-size: 11px;
	}

	.subtotal td {
		background: #ffffcc;
	}

	.grand td {
		background: #ccffcc;
	}

	.totals .subtotal td.check {
		background: #ffffcc;
	}

	.totals .grand td.check {
		background: #ccffcc;
	}

	.totals .caption th {
		height: 17px;
		padding-left: 2px;
		border-right: 0;
		background: #e1e1e1;
		text-align: left;
		font-size: 10px;
	}

	.empty .num {
		color: #999;
		font-weight: normal;
	}

	/* Scroll bars */
	.scrolls {
		flex: none;
		display: flex;
		flex-direction: column;
		width: 15px;
		background: #f0f0f0;
	}

	.scroll {
		flex: 1;
		display: flex;
		flex-direction: column;
		align-items: center;
		padding: 7px 0 5px;
	}

	.scroll.head {
		flex: none;
		box-sizing: border-box;
		height: 75px;
	}

	.scroll i {
		border-top-color: #555;
	}

	.scroll .up {
		border-top: 0;
		border-bottom: 4px solid #555;
	}

	.scroll .down {
		margin-top: auto;
	}

	.thumb {
		width: 10px;
		height: 11px;
		margin-top: 5px;
		border: 1px solid #a5a5a5;
		border-radius: 2px;
		background: linear-gradient(90deg, #f8f8f8, #d5d5d5);
	}

	.thumb.long {
		height: 37px;
		background:
			repeating-linear-gradient(#777 0 1px, transparent 1px 3px) no-repeat center / 6px 7px,
			linear-gradient(90deg, #f8f8f8, #d0d0d0);
	}

	/* Sheet tabs */
	.sheets {
		flex: none;
		display: flex;
		height: 19px;
	}

	.sheets button {
		position: relative;
		height: 17px;
		margin-right: -4px;
		padding: 0 8px 0 6px;
		font-size: 9px;
		white-space: nowrap;
	}

	.sheets svg {
		position: absolute;
		inset: 0;
		width: 100%;
		height: 100%;
	}

	.sheets path {
		fill: #f4f4f4;
		stroke: #999;
	}

	.sheets .active path {
		fill: #fff;
	}

	.sheets span {
		position: relative;
	}

	.sheets .active {
		font-weight: bold;
	}

	/* Status bar */
	.status {
		flex: none;
		display: flex;
		align-items: center;
		height: 19px;
		background: #f0eded;
		font-size: 9px;
	}

	.part {
		box-sizing: border-box;
		width: 157px;
		padding-left: 4px;
		border-right: 1px solid #e2dcdc;
		white-space: nowrap;
	}

	.part.last {
		width: 110px;
	}

	.contacts {
		flex: 1;
		text-align: right;
	}

	.size-grip {
		align-self: flex-end;
		margin: 0 1px 2px 2px;
	}
</style>
